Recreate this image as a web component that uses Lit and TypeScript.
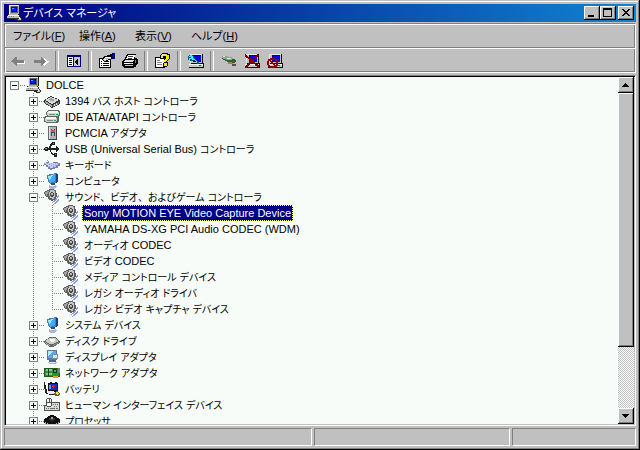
import { LitElement, html, css, svg, nothing } from "lit";
import { customElement, property } from "lit/decorators.js";

/* ---------- 16 x 16 icon artwork ---------- */

const monitor = svg`
  <path d="M3 0h11v9H3z" fill="#202020"/><path d="M3 0h10v9H3z" fill="#a8a8a8"/>
  <path d="M3 0h10v1H4v8H3z" fill="#f0f0f0"/><path d="M5 1h7v7H5z" fill="#606060"/><path d="M5 2h6v5H5z" fill="#0000c0"/>
  <path d="M6 3h4v3H6z" fill="#0020ff"/><path d="M6 3h2v1H6z" fill="#60a0ff"/>`;

const toolPc = svg`
  <path d="M3 1h12v9h1v5H1v-4h2z" fill="#101010"/><path d="M2 1h12v9H2z" fill="#c0c0c0"/>
  <path d="M2 1h12v1H3v8H2z" fill="#e8e8e8"/><path d="M5 2h8v7H5z" fill="#000080"/><path d="M6 3h7v6H6z" fill="#0000e8"/>
  <path d="M1 11h14v3H1z" fill="#c8c8c8"/><path d="M1 11h14v1H1z" fill="#f4f4f4"/>
  <path d="M11 12h2v1h-2z" fill="#008000"/>`;

const icons: Record<string, unknown> = {
  pc: svg`${monitor}
    <path d="M2 9h11v1h1v2h1v1h1v2h-1v1h-4v-1H9v-1H1v-3h1z" fill="#303030"/>
    <path d="M3 9h9v1H3zM1 11h11v2H1z" fill="#c0c0c0"/><path d="M2 10h11v1H2z" fill="#f0f0f0"/>
    <path d="M3 11h1v1H3zM5 11h1v1H5zM7 11h1v1H7z" fill="#808080"/>
    <path d="M11 11h2v1h1v1h1v2h-3v-1h1v-1h-2z" fill="#c0c0c0"/><path d="M13 12h1v2h-1z" fill="#fff"/>`,
  firewire: svg`
    <path d="M0 7l7-4 9 4v4l-8 4-8-5z" fill="#383838"/><path d="M1 7l6-3 8 3-7 4z" fill="#d8d8d8"/>
    <path d="M4 7l3-2 4 2-3 1z" fill="#a0a0a0"/><path d="M1 8l7 4v2l-7-4z" fill="#a8a8a8"/>
    <path d="M9 12l6-3v2l-6 3z" fill="#707070"/><path d="M10 11h1v2h-1zM12 10h1v2h-1z" fill="#d8d8d8"/>`,
  ide: svg`
    <path d="M4 1h11v1h1v5h-1v6h-1v1H2v-1H0V8h1V7h2V6H2V3h1V2h1z" fill="#606860"/>
    <path d="M4 2h10v1h1v3h-1v1H4V6H3V3h1z" fill="#d0d4d0"/><path d="M5 2h9v2H4V3h1z" fill="#f4f8f4"/>
    <path d="M2 8h10v1h1v3h-1v1H2v-1H1V9h1z" fill="#d0d4d0"/><path d="M2 8h10v2H2z" fill="#f4f8f4"/>
    <path d="M3 11h6v1H3zM5 5h6v1H5z" fill="#808880"/><path d="M10 11h2v1h-2zM12 5h2v1h-2z" fill="#00b040"/>`,
  pcmcia: svg`
    <path d="M4 1h9v14H4z" fill="#686868"/><path d="M5 2h7v12H5z" fill="#b0b4b8"/>
    <path d="M5 2h1v12H5z" fill="#e0e4e8"/><path d="M7 4h4v7H7z" fill="#404858"/>
    <path d="M7 5h4v2H7z" fill="#d85848"/><path d="M8 4h2v1H8zM8 8h2v3H8z" fill="#98b8d8"/>
    <path d="M12 2h1v13H5v-1h7z" fill="#404040"/>`,
  usb: svg`
    <path d="M0 7h1V6h3v1h8V5l4 3-4 3V9H4v1H1V9H0z" fill="#202020"/>
    <path d="M4 7h1V5h1V3h1V2h1V1h3v3H8v1H7v2zM6 9h1v2h1v1h1v1h1v-1h3v4h-3v-2H8v-1H7v-2H6z" fill="#202020"/>
    <path d="M1 7h2v1H1z" fill="#a0a0a0"/><path d="M9 2h1v1H9zM11 13h1v1h-1z" fill="#888"/>`,
  keyboard: svg`
    <path d="M0 6h2V5h3v1h4V5h5v1h2v3h-2v2h-3v1H8v1H6v-1H4v-2H2V8H0z" fill="#7880b0"/>
    <path d="M1 6h13v2h-2v2H9v1H6v-1H4V8H2V7H1z" fill="#c8d0f8"/>
    <path d="M3 6h1v1H3zM5 7h1v1H5zM7 6h1v1H7zM9 7h1v1H9zM11 6h1v1h-1zM7 8h1v1H7zM5 9h1v1H5zM11 8h1v1h-1zM9 9h1v1H9z" fill="#909cd4"/>
    <path d="M4 4h1v1H4zM3 3h1v1H3zM13 6h2v1h-2z" fill="#98a0c8"/>`,
  computer: svg`
    <path d="M3 2l9-2 1 1v8l-3 2H6L4 9z" fill="#5878a8"/><path d="M4 3l7-2v7l-5 2-1-2z" fill="#38b0f8"/>
    <path d="M4 3l5-1-3 5H5z" fill="#a0e4ff"/><path d="M12 1h2v8l-2 1z" fill="#203c80"/>
    <path d="M7 10h4v2H7z" fill="#384880"/><path d="M5 12h7l1 2-3 2H6l-1-2z" fill="#a8b4d0"/>
    <path d="M6 12h5v1H6z" fill="#f0f4ff"/>`,
  sound: svg`
    <path d="M0 3h1V2h2V1h2V0h5v1h2v3h1v4h-1v2h-1v1H9v1H7v-1H5v-1H4V8H2V7H1V5H0z" fill="#606060"/>
    <path d="M1 3h2V2h2v1H4v2H3v2H2V5H1z" fill="#a0a0a0"/>
    <path d="M6 1h4v1h1v6h-1v2H8V9H6V7H5V3h1z" fill="#c4c4c0"/>
    <path d="M7 3h2v1h1v3H9v1H7V7H6V4h1z" fill="#484848"/><path d="M7 4h2v2H7z" fill="#b8b8b8"/>
    <path d="M12 9h1v2h-1v1h-1v1H9v1H8v-1h1v-1h1v-1h1v-1h1zM14 10h1v2h-1v1h-1v1h-1v1h-2v1H9v-1h1v-1h1v-1h1v-1h1v-1h1zM14 6h1v2h-1v1h-1V7h1z" fill="#8c98e8"/>`,
  disk: svg`
    <path d="M0 8l6-4h5l5 4v2l-7 4H6L0 10z" fill="#686868"/><path d="M1 8l5-3h5l4 3-6 3H6z" fill="#c8ccc8"/>
    <path d="M5 7l2-1h3l2 1-3 2H7z" fill="#f8f8f8"/><path d="M1 9l5 3v1l-5-3z" fill="#b0b0b0"/>
    <path d="M9 12l6-3v1l-6 3z" fill="#808880"/><path d="M12 10h2v1h-2z" fill="#40c040"/>`,
  display: svg`
    <path d="M3 1h10v10H3z" fill="#607898"/><path d="M4 2h8v7H4z" fill="#48b0f0"/>
    <path d="M4 2h5L5 7H4z" fill="#b0e8ff"/><path d="M8 5h6v5H8z" fill="#8090a8"/>
    <path d="M9 6h4v3H9z" fill="#c8e8f8"/><path d="M5 11h7v2H5z" fill="#486890"/>
    <path d="M4 13h9l-1 2H5z" fill="#a8b4d0"/><path d="M5 13h6v1H5z" fill="#e8f0ff"/>`,
  network: svg`
    <path d="M0 3h16v9h-2v1H9v-1H0z" fill="#205820"/><path d="M1 4h14v7H1z" fill="#309038"/>
    <path d="M2 4h2v2H2zM5 4h3v2H5zM2 8h2v2H2zM5 8h3v2H5z" fill="#88c888"/>
    <path d="M9 4h4v4H9zM4 4h1v7H4z" fill="#184018"/><path d="M10 5h2v2h-2z" fill="#60a060"/>
    <path d="M9 11h5v2H9z" fill="#d0b020"/><path d="M14 3h2v5h-2z" fill="#808080"/>`,
  battery: svg`
    <path d="M0 1h1v3h1v4h1v4h3v1h4v1H5v-1H2v-1H1V8H0z" fill="#202020"/>
    <path d="M4 2h2V1h2v1h3V1h2v1h1v8h-2v1H5v-1H4z" fill="#101028"/><path d="M5 3h8v6H5z" fill="#1030c0"/>
    <path d="M9 4h1v1h1v1h-1v1H9V6H8V5h1z" fill="#f02020"/><path d="M5 4h2v4H5z" fill="#60a0ff"/>
    <path d="M4 10h6v3H4z" fill="#e8e8f0"/><path d="M10 12l3-2 3 2v2l-3 1h-2z" fill="#606020"/>
    <path d="M11 12l2-1 2 1v1l-2 1z" fill="#f0e060"/>`,
  hid: svg`
    <path d="M2 2h1V1h4v1h1v3h8v9H0V8h2z" fill="#505050"/><path d="M8 6h7v7H1V9h7z" fill="#d8d8d4"/>
    <path d="M3 2h4v1h1v6H7v1H3V9H2V3h1z" fill="#f8f8f8"/><path d="M2 3h1v6H2zM7 3h1v6H7zM5 2h1v3H5zM3 5h4v1H3zM3 9h4v1H3z" fill="#505050"/>
    <path d="M9 7h1v1H9zM11 7h1v1h-1zM13 7h1v1h-1zM10 9h1v1h-1zM12 9h1v1h-1zM2 11h1v1H2zM4 11h1v1H4zM6 11h5v1H6zM12 11h2v1h-2z" fill="#707070"/>`,
  cpu: svg`
    <path d="M0 6l7-4h2l7 4v4l-7 4H7l-7-4z" fill="#101010"/><path d="M4 6l4-2 4 2-4 2z" fill="#383838"/>
    <path d="M6 5l2-1 2 1-2 1z" fill="#a0a0a0"/>
    <path d="M1 9h1v2H1zM3 10h1v2H3zM5 11h1v2H5zM10 11h1v2h-1zM12 10h1v2h-1zM14 9h1v2h-1z" fill="#b0b0b0"/>`,

  back: svg`<path d="M2 9l5-4v3h8v3H7v2L3 9z" fill="#fff"/><path d="M1 8h1V7h1V6h1V5h1V4h2v3h7v3H7v3H6v-1H5v-1H4v-1H3V9H1z" fill="#808080"/>`,
  forward: svg`<path d="M2 8h8v4h1v1h1v-1h1v-1h1v-1h1V9h1V8h-1l-4-3v3z" fill="#fff"/><path d="M1 7h7V4h1v1h1v1h1v1h1v1h1v1h-1v1h-1v1h-1v1H9v1H8v-3H1z" fill="#808080"/>`,
  panes: svg`
    <path d="M1 2h14v12H1z" fill="#000080"/><path d="M2 4h5v9H2zM8 4h6v9H8z" fill="#fff"/>
    <path d="M3 5h3v1H3zM3 7h3v1H3zM3 9h3v1H3zM3 11h3v1H3z" fill="#000"/>
    <path d="M8 4h6v9H8z" fill="#c8c8c8"/><path d="M12 5v7h-1v-1h-1v-1H9V8h1V7h1V6h1z" fill="#000"/>`,
  props: svg`
    <path d="M0 5h12v10H0z" fill="#000"/><path d="M1 6h10v8H1z" fill="#fff"/>
    <path d="M2 8h1v1H2zM2 10h1v1H2zM2 12h1v1H2zM4 10h6v1H4zM4 12h6v1H4zM7 8h3v1H7z" fill="#000"/>
    <path d="M3 6h1V4h1V3h3V2h3V1h2v5h-2v1H9v1H7v1H5V8H4V7H3z" fill="#000"/>
    <path d="M4 6h1V5h1V4h6v2H9v1H7v1H5V7H4z" fill="#c0c0c0"/><path d="M6 4h6v1H6zM5 6h2v1H5z" fill="#fff"/>
    <path d="M13 0h3v6h-3z" fill="#000080"/>`,
  print: svg`
    <path d="M5 1h9v1h-1v3h2v1h1v5h-1v1h-1v2h-2v1H2v-1H1v-1H0V8h1V7h1V6h1V4h1V2h1z" fill="#000"/>
    <path d="M6 2h7l-1 4H4l1-2z" fill="#fff"/><path d="M6 3h5v1H6zM6 5h4v1H6z" fill="#404040"/>
    <path d="M3 7h9v1h-1v1H2V8h1z" fill="#e0e0e0"/><path d="M2 10h9v1H2z" fill="#fff"/>
    <path d="M3 12h8v1H3z" fill="#c0c0c0"/><path d="M13 7h1v3h-1z" fill="#808080"/><path d="M8 10h2v1H8z" fill="#e0e000"/>`,
  help: svg`
    <path d="M0 4h10v11H0z" fill="#000"/><path d="M1 5h8v9H1z" fill="#fff"/>
    <path d="M2 7h3v1H2zM2 9h5v1H2zM2 11h5v1H2z" fill="#808080"/>
    <path d="M7 0h6v1h2v5h-1v1h-1v1h-1v1h1v4h-1v1H8v-4h1V6h1V5H9v1H5V2h1V1h1z" fill="#000"/>
    <path d="M7 1h5v1h2v4h-1v1h-1v1h-1v1H9V7h1V6h1V3H8v2H6V2h1zM9 10h3v3H9z" fill="#ffe800"/>
    <path d="M7 1h3v1H8v1H7z" fill="#fff8a0"/>`,
  scan: svg`${toolPc}
    <path d="M1 2h4v1h1v2h1v1h1v1h1v1h1v1h1v2h-2V9H8V8H7V7H5v1H2V7H0V3h1z" fill="#006080"/>
    <path d="M2 2h2v1h1v2h1v1h1v1h1v1h1v1H8V8H7V7H4V6H2v1H1V5h2V4H1V3h1z" fill="#40e8ff"/>`,
  enable: svg`
    <path d="M1 4h4l8 2 2 2-3 3H8L5 8 1 6z" fill="#306038"/><path d="M1 3h4l8 2-3 2H6L1 5z" fill="#88a890"/>
    <path d="M2 3h2v1H2zM6 5h4v1H6z" fill="#d8e8d8"/><path d="M7 9h4v1h3v2h-3v-1H7z" fill="#a08050"/>
    <path d="M10 8h4v1h-4zM11 11h4v2h-4z" fill="#585040"/><path d="M12 10h2v1h-2z" fill="#d0b080"/>`,
  remove: svg`${toolPc}<path d="M1 2l14 12M14 2L1 15" fill="none" stroke="#800000" stroke-width="2"/>`,
  disable: svg`${toolPc}
    <path d="M3 5h5v1h2v2h1v5h-1v1H8v1H3v-1H1v-2H0V8h1V6h2zM4 7v1H2v4h1v1h4v-1h2V8H8V7z" fill="#900000" fill-rule="evenodd"/>
    <path d="M2 7h2v1h1v1h1v1h1v1h1v1h1v1H7v-1H6v-1H5v-1H4V9H3V8H2z" fill="#900000"/>`,
};

const icon = (name: string) => html`<svg
  class="icon" viewBox="0 0 16 16" width="16" height="16"
  shape-rendering="crispEdges" aria-hidden="true">${icons[name]}</svg>`;

/* Japanese words get their own size; spaces stay Latin and commas keep their full width. */
const mixed = (text: string) =>
  text
    .split(/(、|[\u3003-\u9fff]+)/)
    .filter(Boolean)
    .map((run) => {
      if (run === "、") return html`<span class="ja full">${run}</span>`;
      return /[\u3003-\u9fff]/.test(run) ? html`<span class="ja">${run}</span>` : run;
    });

const shared = css`
  * { box-sizing: border-box; }
  .icon { display: block; flex: none; }
  .ja { font-size: 10px; font-feature-settings: "palt"; }
  .full { font-feature-settings: normal; }
  button {
    margin: 0; padding: 0; border: 0; background: none;
    font: inherit; color: inherit;
  }
`;

/* ---------- device tree ---------- */

interface Device {
  name: string;
  icon: string;
  open?: boolean;
  leaf?: boolean;
  selected?: boolean;
  children?: Device[];
}

const sound = (name: string, selected = false): Device => ({ name, icon: "sound", leaf: true, selected });

const devices: Device = {
  name: "DOLCE", icon: "pc", open: true,
  children: [
    { name: "1394 バス ホスト コントローラ", icon: "firewire" },
    { name: "IDE ATA/ATAPI コントローラ", icon: "ide" },
    { name: "PCMCIA アダプタ", icon: "pcmcia" },
    { name: "USB (Universal Serial Bus) コントローラ", icon: "usb" },
    { name: "キーボード", icon: "keyboard" },
    { name: "コンピュータ", icon: "computer" },
    {
      name: "サウンド、ビデオ、およびゲーム コントローラ", icon: "sound", open: true,
      children: [
        sound("Sony MOTION EYE Video Capture Device", true),
        sound("YAMAHA DS-XG PCI Audio CODEC (WDM)"),
        sound("オーディオ CODEC"),
        sound("ビデオ CODEC"),
        sound("メディア コントロール デバイス"),
        sound("レガシ オーディオ ドライバ"),
        sound("レガシ ビデオ キャプチャ デバイス"),
      ],
    },
    { name: "システム デバイス", icon: "computer" },
    { name: "ディスク ドライブ", icon: "disk" },
    { name: "ディスプレイ アダプタ", icon: "display" },
    { name: "ネットワーク アダプタ", icon: "network" },
    { name: "バッテリ", icon: "battery" },
    { name: "ヒューマン インターフェイス デバイス", icon: "hid" },
    { name: "プロセッサ", icon: "cpu" },
  ],
};

@customElement("device-tree")
class DeviceTree extends LitElement {
  @property({ attribute: false }) root: Device = devices;

  static styles = [
    shared,
    css`
      :host { display: block; overflow: hidden; }
      ul { list-style: none; margin: 0; padding: 0; }
      .row { display: flex; align-items: center; height: 16px; }
      .children { padding-left: 19px; }
      .item {
        background: repeating-linear-gradient(#808080 0 1px, transparent 1px 2px) 8px 0 / 1px 100% no-repeat;
      }
      .item.last { background-size: 1px 8px; }
      .root { background: none; }
      .twig {
        flex: none; display: flex; align-items: center; width: 19px; height: 16px; padding-left: 4px;
        background: repeating-linear-gradient(90deg, #808080 0 1px, transparent 1px 2px) 8px 8px / 11px 1px no-repeat;
      }
      .box { display: grid; width: 9px; height: 9px; border: 1px solid #808080; background: #f8fcf8; }
      .box svg { display: block; }
      .label { margin-left: 3px; padding: 0 2px; line-height: 16px; white-space: pre; }
      .selected { background: #000080; color: #fff; outline: 1px dotted #f8fc80; outline-offset: -1px; }
    `,
  ];

  private node(d: Device, last = false, root = false): unknown {
    return html`<li role="treeitem" class="item ${last ? "last" : ""} ${root ? "root" : ""}">
      <div class="row">
        <span class="twig">
          ${d.leaf
            ? nothing
            : html`<button class="box" aria-label=${d.name}>
                <svg width="7" height="7" viewBox="0 0 7 7" shape-rendering="crispEdges">
                  <path d=${d.open ? "M1 3h5v1H1z" : "M1 3h5v1H1zM3 1h1v5H3z"} />
                </svg>
              </button>`}
        </span>
        ${icon(d.icon)}
        <span class="label ${d.selected ? "selected" : ""}">${mixed(d.name)}</span>
      </div>
      ${d.children
        ? html`<ul class="children" role="group">
            ${d.children.map((c, i, all) => this.node(c, i === all.length - 1 && !!c.leaf))}
          </ul>`
        : nothing}
    </li>`;
  }

  render() {
    return html`<ul role="tree">${this.node(this.root, false, true)}</ul>`;
  }
}

/* ---------- window ---------- */

const tools: string[][] = [
  ["back", "forward"],
  ["panes"],
  ["props", "print"],
  ["help"],
  ["scan"],
  ["enable", "remove", "disable"],
];

const menus = [
  ["ファイル", "F"],
  ["操作", "A"],
  ["表示", "V"],
  ["ヘルプ", "H"],
];

@customElement("app-root")
class AppRoot extends LitElement {
  static styles = [
    shared,
    css`
      :host {
        display: flex; flex-direction: column; box-sizing: border-box; height: 100vh;
        padding: 2px; background: #c0c0c0; color: #000;
        font: 11px/16px "Liberation Sans", "Noto Sans CJK JP", sans-serif;
        box-shadow: inset -1px -1px #000, inset 1px 1px #c0c0c0, inset -2px -2px #808080, inset 2px 2px #fff;
      }
      .frame { flex: 1; min-height: 0; display: flex; flex-direction: column; padding: 2px; }

      .title {
        flex: none; display: flex; align-items: center; height: 18px; padding: 0 2px;
        background: linear-gradient(90deg, #000080, #1084d0); color: #fff;
      }
      .title h1 { flex: 1; margin: 0 0 0 1px; font: inherit; }
      .caption { display: grid; width: 16px; height: 14px; }
      .caption:last-child { margin-left: 2px; }
      .raised {
        background: #c0c0c0;
        box-shadow: inset -1px -1px #000, inset 1px 1px #fff, inset -2px -2px #808080;
      }

      .bars {
        flex: none; display: flex; flex-direction: column; margin-top: 1px; height: 50px;
        border: 1px solid; border-color: #808080 #fff #fff #808080;
        box-shadow: inset 1px 1px #fff, inset -1px -1px #808080;
      }
      .menu {
        display: grid; grid-template-columns: 66px 56px 56px 60px; align-items: center;
        height: 24px; padding-left: 8px; border-bottom: 1px solid #808080;
      }
      .menu button { text-align: left; white-space: nowrap; }
      .menu .ja, .title .ja { font-size: 11px; }
      .tools { flex: 1; display: flex; align-items: center; padding-left: 1px; border-top: 1px solid #fff; }
      .group { display: flex; align-items: center; }
      .group + .group::before {
        content: ""; width: 2px; height: 20px; margin: 0 3px;
        border-left: 1px solid #808080; border-right: 1px solid #fff;
      }
      .tool { display: grid; place-items: center; width: 23px; height: 22px; }

      .view {
        flex: 1; min-height: 0; display: flex; margin-top: 2px; background: #f8fcf8;
        border: 1px solid; border-color: #808080 #fff #fff #808080;
        box-shadow: inset 1px 1px #000, inset -1px -1px #c0c0c0; padding: 1px;
      }
      device-tree { flex: 1; min-width: 0; }
      .scroll {
        flex: none; display: flex; flex-direction: column; width: 16px;
        background: repeating-conic-gradient(#c0c0c0 0 25%, #fff 0 50%) 0 0 / 2px 2px;
      }
      .arrow { flex: none; display: grid; width: 16px; height: 16px; }
      .thumb { flex: 254; }
      .rest { flex: 61; }
      .raised svg { display: block; }

      .status {
        flex: none; display: grid; grid-template-columns: 308fr 195fr 124fr; gap: 2px;
        height: 18px; margin-top: 2px;
      }
      .pane { border: 1px solid; border-color: #808080 #fff #fff #808080; }
    `,
  ];

  private glyph(d: string, w: number, h: number) {
    return html`<svg width=${w} height=${h} viewBox="0 0 ${w} ${h}" shape-rendering="crispEdges"><path d=${d} /></svg>`;
  }

  render() {
    return html`<div class="frame">
      <header class="title">
        ${icon("pc")}
        <h1>${mixed("デバイス マネージャ")}</h1>
        <button class="caption raised" aria-label="最小化">${this.glyph("M4 9h6v2H4z", 16, 14)}</button>
        <button class="caption raised" aria-label="最大化">
          ${this.glyph("M3 2h9v9H3zM4 4v6h7V4z", 16, 14)}
        </button>
        <button class="caption raised" aria-label="閉じる">
          ${this.glyph("M4 3h2v1h1v1h2V4h1V3h2v1h-1v1h-1v1H9v1h1v1h1v1h1v1h-2V9H9V8H7v1H6v1H4V9h1V8h1V7h1V6H6V5H5V4H4z", 16, 14)}
        </button>
      </header>

      <div class="bars">
        <nav class="menu">
          ${menus.map(([name, key]) => html`<button><span class="ja">${name}</span>(<u>${key}</u>)</button>`)}
        </nav>
        <div class="tools" role="toolbar">
          ${tools.map(
            (group) => html`<div class="group">
              ${group.map((t) => html`<button class="tool" aria-label=${t}>${icon(t)}</button>`)}
            </div>`,
          )}
        </div>
      </div>

      <main class="view">
        <device-tree></device-tree>
        <div class="scroll">
          <button class="arrow raised" aria-label="上へ">
            ${this.glyph("M7 6h1v1h1v1h1v1h1v1H4V9h1V8h1V7h1z", 16, 16)}
          </button>
          <div class="thumb raised"></div>
          <div class="rest"></div>
          <button class="arrow raised" aria-label="下へ">
            ${this.glyph("M4 6h7v1h-1v1H9v1H8v1H7V9H6V8H5V7H4z", 16, 16)}
          </button>
        </div>
      </main>

      <footer class="status">
        <div class="pane"></div>
        <div class="pane"></div>
        <div class="pane"></div>
      </footer>
    </div>`;
  }
}
